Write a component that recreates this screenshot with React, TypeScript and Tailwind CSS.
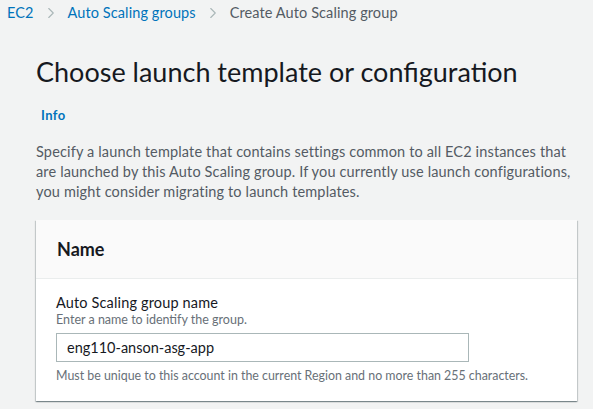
import { ChevronRight } from "lucide-react";

function Crumb({ label, current }: { label: string; current?: boolean }) {
  return (
    <span className={current ? "text-[#545b64]" : "text-[#0073bb]"}>{label}</span>
  );
}

function Sep() {
  return (
    <span className="flex w-[34px] justify-center text-[#aab7b8]">
      <ChevronRight size={18} strokeWidth={1.5} />
    </span>
  );
}

export default function App() {
  return (
    <main
      className="min-h-screen bg-[#f2f3f3] text-[#16191f]"
      style={{ fontFamily: '"Lato", "Noto Sans", sans-serif' }}
    >
      <nav className="flex h-[25px] items-center pl-[7px] text-[14.5px] tracking-[0.1px]">
        <Crumb label="EC2" />
        <Sep />
        <Crumb label="Auto Scaling groups" />
        <Sep />
        <Crumb label="Create Auto Scaling group" current />
      </nav>

      <div className="pl-[36px] pr-[16px]">
        <h1 className="mt-[31px] text-[27px] leading-[32px] font-normal">
          Choose launch template or configuration
        </h1>
        <div className="mt-[19px] pl-[5px] text-[13px] font-bold leading-[16px] tracking-[0.4px] text-[#0073bb]">
          Info
        </div>
        <p className="mt-[19px] text-[14.5px] leading-[20px] tracking-[0.15px] text-[#545b64]">
          Specify a launch template that contains settings common to all EC2 instances that
          are launched by this Auto Scaling group. If you currently use launch configurations,
          you might consider migrating to launch templates.
        </p>

        <section className="mt-[18px] bg-white shadow-[0_1px_1px_0_rgba(0,28,36,0.3),1px_1px_1px_0_rgba(0,28,36,0.15),-1px_1px_1px_0_rgba(0,28,36,0.15)]">
          <div className="border-b border-[#eaeded] bg-[#fafafa] px-[21px] py-[18px]">
            <h2 className="text-[18px] font-bold leading-[22px]">Name</h2>
          </div>
          <div className="px-[20px] pt-[15px] pb-[17px]">
            <label className="block text-[14.5px] leading-[18px] tracking-[0.15px]">
              Auto Scaling group name
            </label>
            <div className="text-[12.5px] leading-[16px] text-[#687078]">
              Enter a name to identify the group.
            </div>
            <input
              type="text"
              defaultValue="eng110-anson-asg-app"
              className="mt-[5px] block h-[29px] w-[413px] border border-[#aab7b8] bg-white px-[10px] text-[14.5px] text-[#16191f] outline-none"
            />
            <div className="mt-[6px] text-[12.4px] leading-[16px] text-[#687078]">
              Must be unique to this account in the current Region and no more than 255 characters.
            </div>
          </div>
        </section>
      </div>
    </main>
  );
}
